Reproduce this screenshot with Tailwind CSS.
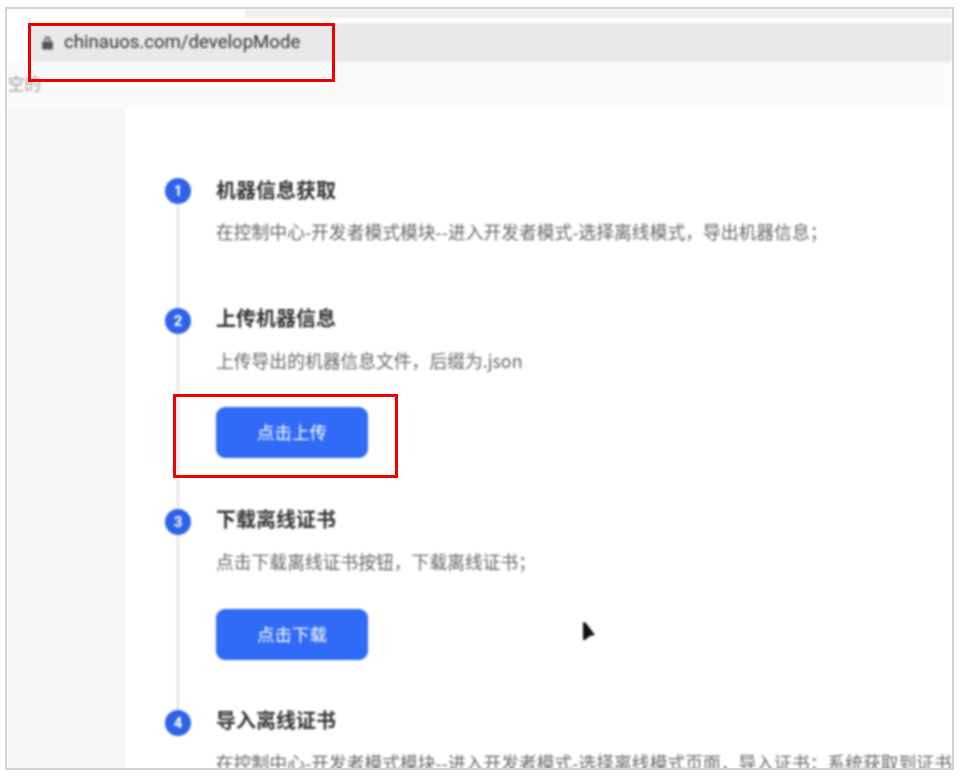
<!doctype html>
<html lang="zh-CN">
  <head>
    <title>chinauos.com/developMode</title>
    <meta charset="UTF-8" />
    <script src="https://cdn.jsdelivr.net/npm/@tailwindcss/browser@4"></script>
  </head>
  <body class="bg-white font-['Noto_Sans_CJK_SC','Noto_Sans',sans-serif]">
    <div class="relative w-[960px] h-[776px] bg-white pt-[7px] pl-[5px] overflow-hidden">
      <div class="w-[949px] h-[763px] border-2 border-[#d2d2d2] overflow-hidden">
        <div class="h-full flex flex-col bg-white blur-[0.8px]">
          <!-- browser chrome -->
          <div class="h-[14px] shrink-0 pl-[238px] bg-white">
            <div class="h-[9px] bg-[#efefef]"></div>
          </div>
          <div class="h-[39px] shrink-0 ml-[24px] bg-[#e9e9e9] flex items-center pl-[10px] gap-[10px]">
            <svg class="w-[13px] h-[15px]" viewBox="0 0 12 14" fill="#555">
              <path d="M3.2 6V4.2a2.8 2.8 0 0 1 5.6 0V6h-1.6V4.2a1.2 1.2 0 0 0-2.4 0V6z" />
              <rect x="1" y="6" width="10" height="7.5" rx="1" />
            </svg>
            <span class="font-['Roboto',sans-serif] text-[18.6px] leading-none text-[#333]">chinauos.com/developMode</span>
          </div>
          <div class="h-[46px] shrink-0 bg-[#fafafa] pt-[9px] pl-px">
            <span class="block text-[16.5px] leading-[24px] text-[#999]">空的</span>
          </div>
          <!-- page -->
          <div class="flex flex-1 min-h-0">
            <div class="w-[118px] shrink-0 bg-[#f4f6f8]"></div>
            <div class="flex-1 min-w-0 bg-white pt-[70px] pl-[40px]">
              <div class="flex gap-[25px] h-[130px]">
                <div class="w-[26px] shrink-0 flex flex-col items-center">
                  <div class="w-[26px] h-[26px] shrink-0 rounded-full bg-[#2f62e8] text-white text-[15px] font-bold leading-[26px] text-center font-['Roboto',sans-serif]">1</div>
                  <div class="w-[2px] flex-1 bg-[#dedede]"></div>
                </div>
                <div>
                  <h2 class="text-[20px] leading-[26px] font-bold text-[#333] -mt-px">机器信息获取</h2>
                  <p class="mt-[15px] text-[17.8px] leading-[26px] text-[#666] whitespace-nowrap">在控制中心-开发者模式模块--进入开发者模式-选择离线模式，导出机器信息；</p>
                </div>
              </div>
              <div class="flex gap-[25px] h-[201px]">
                <div class="w-[26px] shrink-0 flex flex-col items-center">
                  <div class="w-[26px] h-[26px] shrink-0 rounded-full bg-[#2f62e8] text-white text-[15px] font-bold leading-[26px] text-center font-['Roboto',sans-serif]">2</div>
                  <div class="w-[2px] flex-1 bg-[#dedede]"></div>
                </div>
                <div>
                  <h2 class="text-[20px] leading-[26px] font-bold text-[#333] -mt-[3px]">上传机器信息</h2>
                  <p class="mt-[16px] text-[17.8px] leading-[26px] text-[#666] whitespace-nowrap">上传导出的机器信息文件，后缀为.json</p>
                  <button class="mt-[34px] w-[152px] h-[51px] rounded-[9px] bg-[#2f6bf6] text-white text-[17.5px]">点击上传</button>
                </div>
              </div>
              <div class="flex gap-[25px] h-[201px]">
                <div class="w-[26px] shrink-0 flex flex-col items-center">
                  <div class="w-[26px] h-[26px] shrink-0 rounded-full bg-[#2f62e8] text-white text-[15px] font-bold leading-[26px] text-center font-['Roboto',sans-serif]">3</div>
                  <div class="w-[2px] flex-1 bg-[#dedede]"></div>
                </div>
                <div>
                  <h2 class="text-[20px] leading-[26px] font-bold text-[#333] -mt-[3px]">下载离线证书</h2>
                  <p class="mt-[16px] text-[17.8px] leading-[26px] text-[#666] whitespace-nowrap">点击下载离线证书按钮，下载离线证书；</p>
                  <button class="mt-[35px] w-[152px] h-[51px] rounded-[9px] bg-[#2f6bf6] text-white text-[17.5px]">点击下载</button>
                </div>
              </div>
              <div class="flex gap-[25px]">
                <div class="w-[26px] shrink-0">
                  <div class="w-[26px] h-[26px] rounded-full bg-[#2f62e8] text-white text-[15px] font-bold leading-[26px] text-center font-['Roboto',sans-serif]">4</div>
                </div>
                <div class="min-w-0">
                  <h2 class="text-[20px] leading-[26px] font-bold text-[#333] -mt-[3px]">导入离线证书</h2>
                  <p class="mt-[16px] text-[17.8px] leading-[26px] text-[#666] whitespace-nowrap">在控制中心-开发者模式模块--进入开发者模式-选择离线模式页面，导入证书；系统获取到证书</p>
                </div>
              </div>
            </div>
          </div>
        </div>
      </div>

      <!-- annotations over the screenshot -->
      <div class="absolute left-[28px] top-[23px] w-[307px] h-[59px] border-[3px] border-[#f00000] blur-[0.3px]"></div>
      <div class="absolute left-[173px] top-[394px] w-[225px] h-[84px] border-[3px] border-[#f00000] blur-[0.3px]"></div>
      <svg class="absolute left-[581px] top-[621px] w-[16px] h-[20px] blur-[1px]" viewBox="0 0 16 20" fill="#111">
        <path d="M2 1 L5 2 L14 14 L9 15 L4 19 L2 19 Z" />
      </svg>
    </div>
  </body>
</html>
